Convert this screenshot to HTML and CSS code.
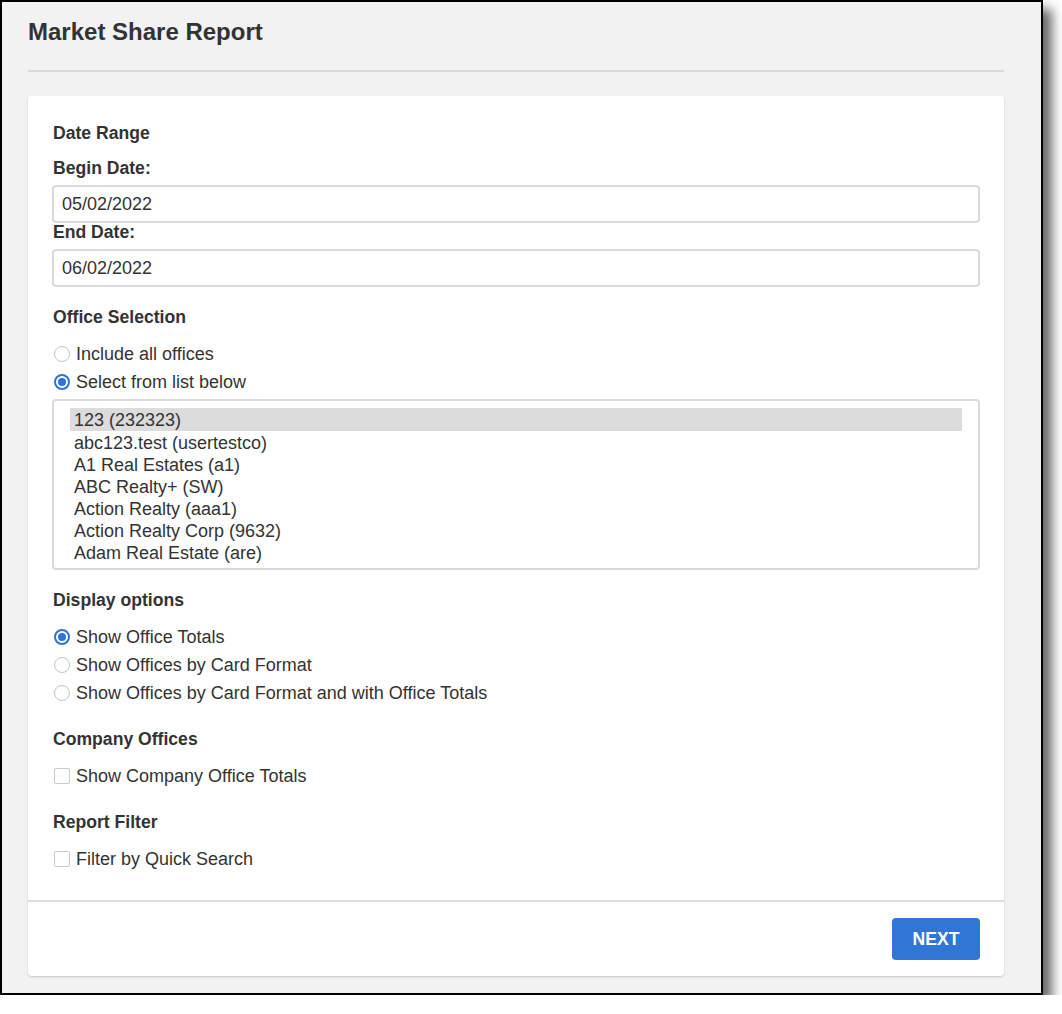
FILE: index.html
```html
<!DOCTYPE html>
<html>
<head>
<meta charset="utf-8">
<link rel="stylesheet" href="styles.css">
</head>
<body>
<div class="window">
  <h1 class="title">Market Share Report</h1>
  <div class="rule"></div>
  <div class="card">
    <div class="card-body">
      <div class="section-title first">Date Range</div>
      <label class="field-label begin">Begin Date:</label>
      <div class="input">05/02/2022</div>
      <label class="field-label end">End Date:</label>
      <div class="input">06/02/2022</div>

      <div class="section-title gap">Office Selection</div>
      <div class="options">
        <div class="opt"><span class="radio"></span>Include all offices</div>
        <div class="opt"><span class="radio on"></span>Select from list below</div>
      </div>
      <div class="listbox">
        <div class="item selected">123 (232323)</div>
        <div class="item">abc123.test (usertestco)</div>
        <div class="item">A1 Real Estates (a1)</div>
        <div class="item">ABC Realty+ (SW)</div>
        <div class="item">Action Realty (aaa1)</div>
        <div class="item">Action Realty Corp (9632)</div>
        <div class="item">Adam Real Estate (are)</div>
      </div>

      <div class="section-title gap">Display options</div>
      <div class="options">
        <div class="opt"><span class="radio on"></span>Show Office Totals</div>
        <div class="opt"><span class="radio"></span>Show Offices by Card Format</div>
        <div class="opt"><span class="radio"></span>Show Offices by Card Format and with Office Totals</div>
      </div>

      <div class="section-title gap2">Company Offices</div>
      <div class="options">
        <div class="opt"><span class="check"></span>Show Company Office Totals</div>
      </div>

      <div class="section-title gap2">Report Filter</div>
      <div class="options">
        <div class="opt"><span class="check"></span>Filter by Quick Search</div>
      </div>
    </div>
    <div class="card-footer">
      <button class="btn">NEXT</button>
    </div>
  </div>
</div>
</body>
</html>
```
FILE: styles.css
```css
html, body {
  margin: 0;
  padding: 0;
  background: #ffffff;
}
body {
  font-family: "Liberation Sans", Arial, sans-serif;
  color: #333333;
  font-size: 18px;
}
.window {
  box-sizing: border-box;
  width: 1043px;
  height: 995px;
  border: 2px solid #000;
  background: #f2f2f2;
  padding: 17px 37px 0 26px;
  box-shadow: 9px 9px 11px rgba(0,0,0,0.6);
}
.title {
  margin: 0;
  font-size: 24px;
  line-height: 26px;
  font-weight: bold;
  color: #333;
}
.rule {
  height: 2px;
  background: #d9d9d9;
  margin-top: 25px;
}
.card {
  margin-top: 24px;
  background: #fff;
  border-radius: 4px;
  box-shadow: 0 1px 2px rgba(0,0,0,0.18);
}
.card-body {
  padding: 27px 24px 27px 25px;
}
.section-title {
  font-size: 17.6px;
  line-height: 20px;
  font-weight: bold;
}
.section-title.gap { margin-top: 20px; }
.section-title.gap2 { margin-top: 22px; }
.field-label {
  display: block;
  font-size: 17.6px;
  line-height: 20px;
  font-weight: bold;
}
.field-label.begin { margin-top: 15px; margin-bottom: 7px; }
.field-label.end { margin-top: -1px; margin-bottom: 7px; }
.input {
  box-sizing: border-box;
  height: 38px;
  border: 2px solid #dadada;
  border-radius: 4px;
  padding: 0 8px;
  font-size: 18px;
  line-height: 34px;
  color: #333;
  margin-left: -1px;
}
.options {
  margin-top: 13px;
}
.opt {
  display: flex;
  align-items: center;
  height: 28px;
  font-size: 18px;
  color: #333;
}
.radio {
  box-sizing: border-box;
  width: 16px;
  height: 16px;
  border-radius: 50%;
  border: 1px solid #c4c4c4;
  background: #fff;
  margin-left: 1px;
  margin-right: 6px;
  position: relative;
  flex: none;
}
.radio.on {
  border: 2px solid #2f73d6;
}
.radio.on::after {
  content: "";
  position: absolute;
  left: 2px;
  top: 2px;
  width: 8px;
  height: 8px;
  border-radius: 50%;
  background: #2f73d6;
}
.check {
  box-sizing: border-box;
  width: 16px;
  height: 16px;
  border: 1px solid #cacaca;
  border-radius: 2px;
  background: #fff;
  margin-left: 1px;
  margin-right: 6px;
  flex: none;
}
.listbox {
  box-sizing: border-box;
  margin-top: 3px;
  margin-left: -1px;
  height: 171px;
  border: 2px solid #dadada;
  border-radius: 4px;
  padding: 7px 16px 0 16px;
  overflow: hidden;
}
.item {
  font-size: 18px;
  line-height: 22px;
  height: 22px;
  padding-left: 4px;
  padding-top: 1px;
  margin-bottom: -1px;
  color: #333;
  white-space: nowrap;
}
.item.selected {
  background: #dcdcdc;
  line-height: 22px;
  height: 22px;
  padding-top: 1px;
  margin-bottom: 0;
}
.card-footer {
  border-top: 2px solid #dedede;
  display: flex;
  justify-content: flex-end;
  padding: 16px 24px 16px 0;
}
.btn {
  width: 88px;
  height: 42px;
  border: none;
  border-radius: 4px;
  background: #3176d5;
  color: #fff;
  font-family: "Liberation Sans", Arial, sans-serif;
  font-weight: bold;
  font-size: 17.6px;
  padding: 0;
}
```
